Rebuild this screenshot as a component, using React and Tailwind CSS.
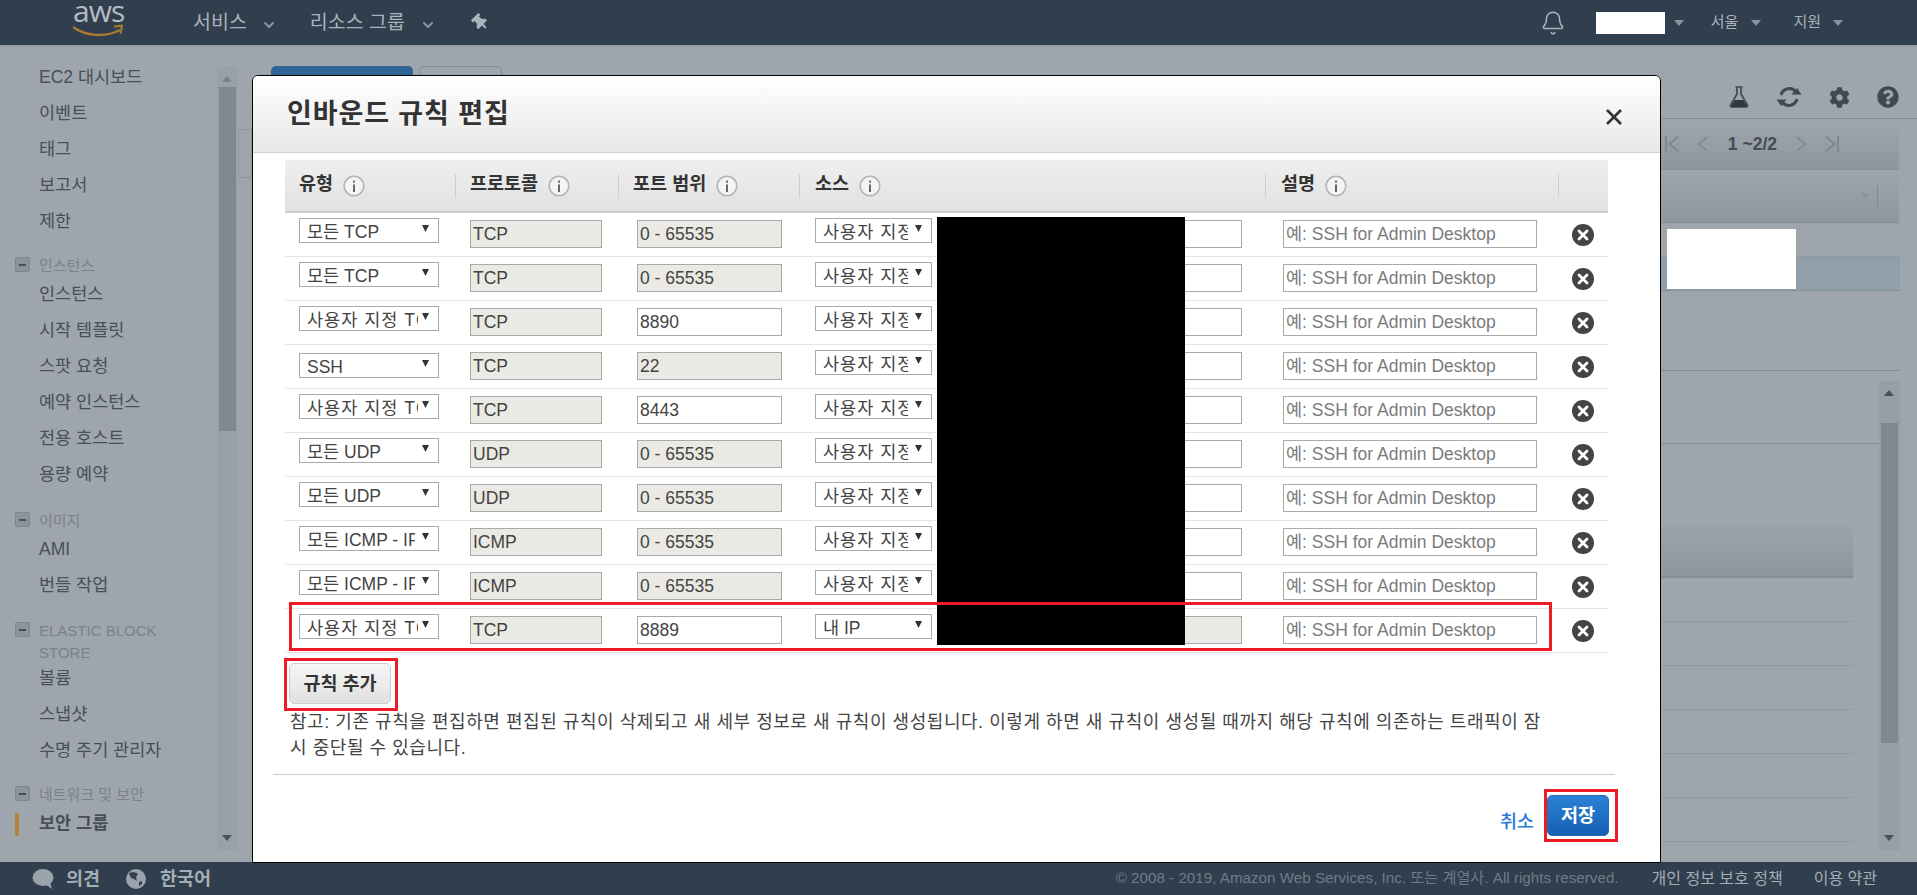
import React from "react";
import { Bell, ChevronDown } from "lucide-react";
import { FaCog, FaQuestionCircle, FaThumbtack } from "react-icons/fa";

const ROWS = [
  { type: "모든 TCP", proto: "TCP", port: "0 - 65535", portLocked: true },
  { type: "모든 TCP", proto: "TCP", port: "0 - 65535", portLocked: true },
  { type: "사용자 지정 TCP", proto: "TCP", port: "8890" },
  { type: "SSH", proto: "TCP", port: "22", portLocked: true, lowSelect: true },
  { type: "사용자 지정 TCP", proto: "TCP", port: "8443" },
  { type: "모든 UDP", proto: "UDP", port: "0 - 65535", portLocked: true },
  { type: "모든 UDP", proto: "UDP", port: "0 - 65535", portLocked: true },
  { type: "모든 ICMP - IPv4", proto: "ICMP", port: "0 - 65535", portLocked: true },
  { type: "모든 ICMP - IPv4", proto: "ICMP", port: "0 - 65535", portLocked: true },
  { type: "사용자 지정 TCP", proto: "TCP", port: "8889", source: "내 IP", sourceLocked: true },
];

const NAV = [
  { items: ["EC2 대시보드", "이벤트", "태그", "보고서", "제한"] },
  { title: "인스턴스", items: ["인스턴스", "시작 템플릿", "스팟 요청", "예약 인스턴스", "전용 호스트", "용량 예약"], gap: "mt-[14px]" },
  { title: "이미지", items: ["AMI", "번들 작업"], gap: "mt-[16px]" },
  { title: "ELASTIC BLOCK STORE", items: ["볼륨", "스냅샷", "수명 주기 관리자"], gap: "mt-[15px]", tall: true },
  { title: "네트워크 및 보안", items: ["보안 그룹", "탄력적 IP"], gap: "mt-[14px]" },
];

function Caret({ className = "" }) {
  return (
    <svg width="10" height="6" viewBox="0 0 10 6" className={className}>
      <path d="M0 0h10L5 6z" fill="#8a949e" />
    </svg>
  );
}

function InfoIcon() {
  return (
    <svg width="22" height="22" viewBox="0 0 22 22" className="ml-[10px] shrink-0">
      <circle cx="11" cy="11" r="9.8" fill="#f4f4f4" stroke="#b4b4b4" strokeWidth="1.6" />
      <rect x="10" y="9.5" width="2" height="7.5" fill="#666" />
      <rect x="10" y="5.6" width="2" height="2" fill="#666" />
    </svg>
  );
}

function DeleteIcon() {
  return (
    <svg width="22" height="22" viewBox="0 0 22 22" className="mx-auto mt-[11px]">
      <circle cx="11" cy="11" r="11" fill="#444444" />
      <path d="M7 7l8 8M15 7l-8 8" stroke="#fff" strokeWidth="2.8" strokeLinecap="round" />
    </svg>
  );
}

function SelectBox({ value, className = "" }) {
  // the Korean face in the reference runs wider than Noto
  const spacing = value.startsWith("사용자") ? "tracking-[1px]" : "";
  const clip = value === "사용자 지정 TCP" ? "pr-[20px]" : "pr-[23px]";
  return (
    <div className={`relative h-[25px] ${className}`}>
      <select
        value={value}
        onChange={() => {}}
        className={`block h-full w-full appearance-none rounded-none border border-[#a9a9a9] bg-white pl-[7px] pt-[3px] text-[17.5px] leading-[20px] text-[#444] ${clip} ${spacing}`}
      >
        <option>{value}</option>
      </select>
      <svg width="7" height="7" viewBox="0 0 7 7" className="absolute right-[10px] top-[7px]">
        <path d="M0 0h7L3.5 7z" fill="#333" />
      </svg>
    </div>
  );
}

function TextBox({ value, locked, placeholder, className = "" }) {
  const tone = locked ? "bg-[#eae9e3]" : "bg-white";
  return (
    <input
      readOnly
      value={value}
      placeholder={placeholder}
      className={`mt-[7px] h-[28px] border border-[#a9a9a9] pl-[2px] text-[17.5px] text-[#444] placeholder:text-[#7b7b7b] ${tone} ${className}`}
    />
  );
}

function HeadCell({ label, pad, first }) {
  return (
    <div className={`flex h-[24px] items-center ${first ? "" : "border-l border-[#cfcfcf]"} ${pad}`}>
      <span className="-mt-[3px] text-[18.5px] font-bold text-[#333]">{label}</span>
      {label && <InfoIcon />}
    </div>
  );
}

function RuleRow({ row }) {
  return (
    <div className="grid h-[44px] grid-cols-[170px_163px_181px_466px_293px_50px] border-b border-[#e4e4e4]">
      <div className="pl-[14px]">
        <SelectBox value={row.type} className={`w-[140px] ${row.lowSelect ? "mt-[8px]" : "mt-[5px]"}`} />
      </div>
      <div className="pl-[15px]">
        <TextBox value={row.proto} locked className="w-[132px]" />
      </div>
      <div className="pl-[19px]">
        <TextBox value={row.port} locked={row.portLocked} className="w-[145px]" />
      </div>
      <div className="flex items-start pl-[16px]">
        <SelectBox value={row.source || "사용자 지정"} className="mt-[5px] w-[117px]" />
        <TextBox value="" locked={row.sourceLocked} className="ml-[6px] w-[304px]" />
      </div>
      <div className="pl-[18px]">
        <TextBox value="" placeholder="예: SSH for Admin Desktop" className="w-[254px]" />
      </div>
      <div>
        <DeleteIcon />
      </div>
    </div>
  );
}

function RulesModal() {
  return (
    <div className="absolute left-[252px] top-[75px] z-20 h-[788px] w-[1409px] overflow-hidden rounded-t-[6px] border border-black bg-white">
      <div className="flex h-[77px] items-center justify-between border-b border-[#d0d0d0] bg-gradient-to-b from-white to-[#e8e8e8] pl-[34px] pr-[37px]">
        <h2 className="text-[27px] font-bold tracking-[0.9px] text-[#333]">인바운드 규칙 편집</h2>
        <svg width="18" height="18" viewBox="0 0 18 18" className="mt-[6px]">
          <path d="M2 2l14 14M16 2L2 16" stroke="#333" strokeWidth="2.6" />
        </svg>
      </div>

      <div className="ml-[32px] mt-[7px] w-[1323px]">
        <div className="grid h-[53px] grid-cols-[170px_163px_181px_466px_293px_50px] items-center border-b-2 border-[#cccccc] bg-gradient-to-b from-[#efefef] to-[#e1e1e1]">
          <HeadCell label="유형" pad="pl-[14px]" first />
          <HeadCell label="프로토콜" pad="pl-[14px]" />
          <HeadCell label="포트 범위" pad="pl-[14px]" />
          <HeadCell label="소스" pad="pl-[15px]" />
          <HeadCell label="설명" pad="pl-[15px]" />
          <HeadCell label="" pad="" />
        </div>
        {ROWS.map((row, i) => (
          <RuleRow key={i} row={row} />
        ))}
      </div>

      <button className="ml-[36px] mt-[10px] block h-[41px] w-[102px] rounded-[5px] border border-[#cdcdcd] bg-gradient-to-b from-[#f6f6f6] to-[#e0e0e0] text-[18.5px] font-bold text-[#333]">
        규칙 추가
      </button>

      <p className="ml-[37px] mt-[5px] whitespace-nowrap text-[18px] leading-[26px] tracking-[0.55px] text-[#444]">
        참고: 기존 규칙을 편집하면 편집된 규칙이 삭제되고 새 세부 정보로 새 규칙이 생성됩니다. 이렇게 하면 새 규칙이 생성될 때까지 해당 규칙에 의존하는 트래픽이 잠
        <br />
        시 중단될 수 있습니다.
      </p>

      <div className="ml-[20px] mt-[13px] h-px w-[1342px] bg-[#cccccc]" />

      <div className="mt-[20px] flex items-center justify-end gap-[13px] pr-[51px]">
        <a className="mt-[12px] text-[18.5px] font-medium text-[#2a7bd6]">취소</a>
        <button className="h-[41px] w-[62px] rounded-[5px] border border-[#2a6db5] bg-gradient-to-b from-[#2b82d6] to-[#1660b3] text-[18.5px] font-bold text-white">
          저장
        </button>
      </div>
    </div>
  );
}

function TopBar() {
  return (
    <header className="flex h-[46px] shrink-0 items-center border-b border-[#8e979f] bg-[#303e4d] text-[#aab2ba]">
      <div className="relative ml-[73px] h-[46px] w-[52px]">
        <span className="absolute left-0 top-[1px] font-['Open_Sans',sans-serif] text-[30px] leading-[20px] tracking-[-1px] text-[#b4bbc2]">aws</span>
        <svg width="52" height="16" viewBox="0 0 52 16" className="absolute left-0 top-[24px]">
          <path d="M0 3c12 9 32 11 47 3" fill="none" stroke="#a87a30" strokeWidth="2.4" />
          <path d="M41 2.5l8-.8-1.5 8" fill="none" stroke="#a87a30" strokeWidth="2" />
        </svg>
      </div>
      <span className="ml-[68px] text-[19.5px]">서비스</span>
      <ChevronDown size={16} strokeWidth={3} className="ml-[14px] mt-[4px] text-[#8a949e]" />
      <span className="ml-[33px] text-[19.5px]">리소스 그룹</span>
      <ChevronDown size={16} strokeWidth={3} className="ml-[15px] mt-[4px] text-[#8a949e]" />
      <FaThumbtack size={17} className="ml-[36px] -rotate-45 text-[#aab2ba]" />
      <Bell size={26} strokeWidth={1.4} className="ml-auto text-[#aab2ba]" />
      <div className="ml-[30px] h-[22px] w-[69px] bg-white" />
      <Caret className="ml-[9px]" />
      <span className="ml-[27px] text-[15px]">서울</span>
      <Caret className="ml-[13px]" />
      <span className="ml-[32px] text-[15px]">지원</span>
      <Caret className="ml-[12px] mr-[74px]" />
    </header>
  );
}

function NavItem({ label, active }) {
  return (
    <div className={`relative flex h-[36px] items-center pl-[39px] text-[17.5px] text-[#474f58] ${active ? "font-bold" : ""}`}>
      {active && <span className="absolute left-[15px] top-[8px] h-[23px] w-[4px] rounded-[1px] bg-[#b0843a]" />}
      {label}
    </div>
  );
}

function Sidebar() {
  return (
    <aside className="relative h-[804px] w-[237px] shrink-0 overflow-hidden pt-[13px]">
      {NAV.map((group, g) => (
        <div key={g} className={group.gap || ""}>
          {group.title && (
            <div className={`relative pl-[39px] pr-[40px] pt-[2px] text-[15px] leading-[22px] text-[#7a828a] ${group.tall ? "h-[42px]" : "h-[23px]"}`}>
              <span className="absolute left-[15px] top-[4px] flex h-[15px] w-[15px] items-center justify-center rounded-[2px] border border-[#7d858d] bg-[#8b939b]">
                <span className="h-[2px] w-[7px] bg-[#474f58]" />
              </span>
              {group.title}
            </div>
          )}
          {group.items.map((item) => (
            <NavItem key={item} label={item} active={item === "보안 그룹"} />
          ))}
        </div>
      ))}

      {/* scrollbar */}
      <div className="absolute bottom-0 left-[217px] top-[20px] w-[20px] bg-[#98a0a8]">
        <svg width="10" height="6" viewBox="0 0 10 6" className="absolute left-[5px] top-[10px]">
          <path d="M5 0l5 6H0z" fill="#7a828a" />
        </svg>
        <div className="absolute left-[2px] top-[21px] h-[344px] w-[17px] bg-[#7f878f]" />
        <svg width="10" height="6" viewBox="0 0 10 6" className="absolute bottom-[9px] left-[5px]">
          <path d="M0 0h10L5 6z" fill="#4a525a" />
        </svg>
      </div>
    </aside>
  );
}

function PagerIcon({ d }) {
  return (
    <svg width="16" height="18" viewBox="0 0 16 18">
      <path d={d} fill="none" stroke="#7d858d" strokeWidth="1.6" />
    </svg>
  );
}

function Backdrop() {
  return (
    <main className="relative min-w-0 flex-1">
      {/* behind the modal */}
      <div className="ml-[15px] flex h-[73px] justify-between border-b border-[#858d95] pr-[18px]">
        <div className="ml-[19px] mt-[20px] flex gap-[6px]">
          <div className="h-[40px] w-[142px] rounded-t-[5px] bg-[#2f6596]" />
          <div className="h-[40px] w-[83px] rounded-t-[5px] border border-[#858d95]" />
        </div>
        <div className="mt-[40px] flex h-[22px] items-center gap-[27px] text-[#3f4952]">
          <svg width="20" height="22" viewBox="0 0 20 22">
            <path d="M6.5 1h7M8 1v7L1.500 19a1.500 1.500 0 0 0 1.300 2h14.400a1.500 1.500 0 0 0 1.300-2L12 8V1" fill="none" stroke="#3f4952" strokeWidth="1.7" />
            <path d="M5.500 14h9l4 7H1.500z" fill="#2f3942" />
          </svg>
          <svg width="26" height="24" viewBox="0 0 26 24">
            <path d="M5 10a8.500 8.500 0 0 1 15-3M21 14a8.500 8.500 0 0 1-15 3" fill="none" stroke="#3f4952" strokeWidth="3" />
            <path d="M15.500 9.500h10L21 3zM10.500 14.500H.5L5 21z" fill="#3f4952" />
          </svg>
          <FaCog size={21} />
          <FaQuestionCircle size={22} />
        </div>
      </div>

      <div className="ml-[15px] mr-[18px] flex h-[51px] items-center justify-end border-b border-[#858d95] bg-gradient-to-b from-[#9ea5ad] to-[#8e969e] pr-[59px]">
        <PagerIcon d="M2 1v16M14 2L5 9l9 7" />
        <div className="w-[14px]" />
        <PagerIcon d="M13 2L5 9l8 7" />
        <span className="ml-[18px] mr-[17px] text-[17.5px] font-bold text-[#444c55]">1 ~2/2</span>
        <PagerIcon d="M3 2l8 7-8 7" />
        <div className="w-[14px]" />
        <PagerIcon d="M2 2l9 7-9 7M14 1v16" />
      </div>

      <div className="ml-[15px] mr-[18px] flex h-[53px] items-center justify-end gap-[7px] border-b border-[#858d95] bg-gradient-to-b from-[#9ea5ad] to-[#8e969e] pr-[21px]">
        <Caret />
        <div className="h-[22px] w-px bg-[#7f878f]" />
      </div>

      <div className="ml-[15px] mr-[17px] h-[34px] border-b border-[#8f98a0]" />
      <div className="ml-[15px] mr-[17px] h-[34px] border-b border-[#87909a] bg-[#919faa]" />
      <div className="ml-[15px] mr-[17px] h-[80px] border-b border-[#838b93]" />

      <div className="relative mr-[17px] pt-[10px]">
        <div className="flex justify-end">
          <div className="relative h-[469px] w-[21px] bg-[#969ea6]">
            <svg width="10" height="6" viewBox="0 0 10 6" className="absolute left-[5px] top-[9px]">
              <path d="M5 0l5 6H0z" fill="#47505a" />
            </svg>
            <div className="absolute left-[2px] top-[42px] h-[320px] w-[17px] bg-[#7f878f]" />
            <svg width="10" height="6" viewBox="0 0 10 6" className="absolute bottom-[9px] left-[5px]">
              <path d="M0 0h10L5 6z" fill="#47505a" />
            </svg>
          </div>
        </div>
        {/* table rows of the lower panel */}
        <div className="absolute left-[15px] right-[21px] top-0">
          <div className="mt-[72px] border-t border-[#858d95]" />
          <div className="mr-[26px] mt-[82px] h-[52px] border-b-2 border-[#858d95] bg-gradient-to-b from-[#9ba2aa] to-[#8f969e]" />
          {[0, 1, 2, 3, 4, 5, 6].map((n) => (
            <div key={n} className="mr-[26px] h-[44px] border-b border-[#8f97a0]" />
          ))}
        </div>
      </div>
    </main>
  );
}

function Footer() {
  return (
    <footer className="relative z-10 flex h-[33px] shrink-0 items-center bg-[#303e4d] text-[#a5aeb7]">
      <svg width="22" height="22" viewBox="0 0 22 22" className="ml-[32px]">
        <ellipse cx="11" cy="9.500" rx="10.500" ry="8.500" fill="#9aa3ac" />
        <path d="M13 16l7 5-2-7z" fill="#9aa3ac" />
      </svg>
      <span className="ml-[12px] text-[18.5px] font-bold">의견</span>
      <svg width="20" height="20" viewBox="0 0 20 20" className="ml-[26px]">
        <circle cx="10" cy="10" r="10" fill="#9aa3ac" />
        <path d="M3 4c3-1 7-1 9 1l-2 3 1 4-3-2-3-1zM13 13l3-1 0 3-3 2z" fill="#303e4d" />
      </svg>
      <span className="ml-[14px] text-[18.5px] font-bold">한국어</span>
      <span className="ml-auto text-[15.200px] text-[#6f7b87]">© 2008 - 2019, Amazon Web Services, Inc. 또는 계열사. All rights reserved.</span>
      <span className="ml-[33px] text-[16px]">개인 정보 보호 정책</span>
      <span className="ml-[31px] mr-[40px] text-[16px]">이용 약관</span>
    </footer>
  );
}

export default function App() {
  return (
    <div className="relative flex h-[895px] w-[1917px] flex-col overflow-hidden bg-[#9ea5ad] font-['Liberation_Sans','Noto_Sans_CJK_KR',sans-serif]">
      <TopBar />
      <div className="flex min-h-0 flex-1">
        <Sidebar />
        <Backdrop />
      </div>
      <Footer />

      <RulesModal />

      {/* collapse handle at the sidebar edge */}
      <div className="absolute left-[238px] top-[129px] z-10 h-[49px] w-[14px] rounded-l-[4px] border border-[#8e969e]" />

      {/* redactions and annotations over the screenshot */}
      <div className="absolute left-[937px] top-[217px] z-30 h-[428px] w-[248px] bg-black" />
      <div className="absolute left-[1667px] top-[229px] z-30 h-[60px] w-[129px] bg-white" />
      <div className="absolute left-[289px] top-[602px] z-30 h-[49px] w-[1263px] border-[3px] border-[#ed1c24]" />
      <div className="absolute left-[284px] top-[658px] z-30 h-[53px] w-[114px] border-[3px] border-[#ed1c24]" />
      <div className="absolute left-[1544px] top-[789px] z-30 h-[53px] w-[74px] border-[3px] border-[#ed1c24]" />
    </div>
  );
}
